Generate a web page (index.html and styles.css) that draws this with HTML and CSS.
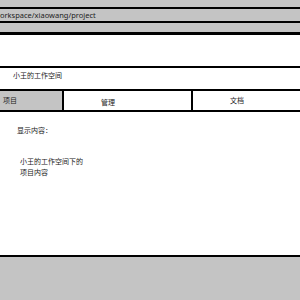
FILE: index.html
```html
<html lang="zh">
<head>
    <title>小王的工作空间</title>
    <meta charset="utf-8">
    <link rel="stylesheet" href="styles.css">
</head>

<body>
    <div id='browser'>
        <div class='chrome-top'></div>
        <div class='address'><span>workspace/xiaowang/project</span></div>
        <div class='toolbar'></div>
    </div>
    <div id='workspace'>
        <div class='title'>小王的工作空间</div>
        <div class='tabs'>
            <div class='tab active'>项目</div>
            <div class='tab'>管理</div>
            <div class='tab'>文档</div>
        </div>
        <div class='content'>
            <div class='label'>显示内容：</div>
            <div class='text'>小王的工作空间下的<br>项目内容</div>
        </div>
    </div>
    <div id='footer'></div>
</body>

</html>
```

FILE: styles.css
```css
body {
    background-color: white;
    margin: 0px;
    padding: 0px;
    width: 300px;
    height: 300px;
    overflow: hidden;
    display: flex;
    flex-direction: column;
    font-family: "Noto Sans", "Noto Sans CJK SC", sans-serif;
    font-size: 7px;
    color: #222;
}

#browser div {
    background-color: #c4c4c4;
    border-bottom: 2px solid black;
}

div.chrome-top {
    height: 7px;
}

div.address {
    height: 12px;
    line-height: 12px;
    overflow: hidden;
    white-space: nowrap;
}

div.address span {
    margin-left: -6px;
    font-size: 7.5px;
}

#browser div.toolbar {
    height: 9px;
    border-bottom-width: 3px;
}

#workspace {
    margin-top: 31px;
    flex: 1;
}

div.title {
    border-top: 2px solid black;
    border-bottom: 2px solid black;
    height: 21px;
    line-height: 16px;
    padding-left: 13px;
    box-sizing: content-box;
}

div.tabs {
    display: flex;
    height: 19px;
    border-bottom: 2px solid black;
}

div.tab {
    line-height: 19px;
    padding-left: 37px;
}

div.tab:nth-child(1) {
    width: 59px;
    padding-left: 3px;
}

div.tab:nth-child(2) {
    width: 90px;
    border-left: 2px solid black;
    line-height: 23px;
}

div.tab:nth-child(3) {
    flex: 1;
    border-left: 2px solid black;
}

div.tab.active {
    background-color: #c4c4c4;
}

div.content {
    padding-top: 14px;
}

div.label {
    padding-left: 17px;
    line-height: 10px;
}

div.text {
    margin-top: 20px;
    padding-left: 20px;
    line-height: 11px;
}

#footer {
    height: 43px;
    background-color: #c4c4c4;
    border-top: 2px solid black;
}
```
